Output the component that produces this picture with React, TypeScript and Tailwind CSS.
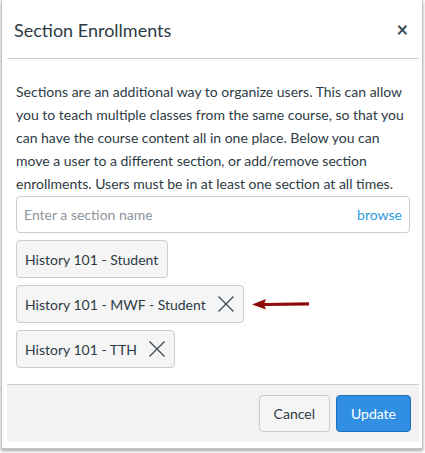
const chips = [
  { label: "History 101 - Student", removable: false },
  { label: "History 101 - MWF - Student", removable: true, pointed: true },
  { label: "History 101 - TTH", removable: true },
];

function CloseIcon() {
  return (
    <svg width="16" height="16" viewBox="0 0 16 16" className="text-[#394b58]">
      <path d="M0.5 0.5 L15.5 15.5 M15.5 0.5 L0.5 15.5" stroke="currentColor" strokeWidth="1.3" fill="none" />
    </svg>
  );
}

export default function App() {
  return (
    <div className="w-[425px] h-[453px] bg-white font-['Lato',sans-serif] text-[#2d3b45]">
      <div className="ml-[1px] w-[422px] h-[449px] border-x border-b border-[#c4c4c4] shadow-[0_2px_3px_rgba(0,0,0,0.35)] pl-[5px] pr-[3px] flex flex-col">
        {/* header */}
        <div className="h-[59px] shrink-0 flex items-center justify-between pl-[7px] pr-[11px] border-b border-[#c7cdd1]">
          <h2 className="text-[18px] leading-none pt-[1px]">Section Enrollments</h2>
          <span className="text-[20px] leading-none font-bold text-[#394b58]">×</span>
        </div>

        {/* body */}
        <div className="flex-1 px-[9px] pt-[21px]">
          <p className="text-[14px] leading-[23px]">
            Sections are an additional way to organize users. This can allow you to teach
            multiple classes from the same course, so that you can have the course content all in
            one place. Below you can move a user to a different section, or add/remove section
            enrollments. Users must be in at least one section at all times.
          </p>

          <div className="mt-[1px] h-[37px] border border-[#c7cdd1] rounded-[4px] flex items-center justify-between px-[7px] text-[14px]">
            <span className="text-[#8b969e]">Enter a section name</span>
            <span className="text-[#2d9be0]">browse</span>
          </div>

          <div className="mt-[7px] flex flex-col items-start gap-[7px]">
            {chips.map((c) => (
              <div key={c.label} className="flex items-center">
                <div className="h-[38px] flex items-center gap-[12px] border border-[#c7cdd1] bg-[#f5f5f5] rounded-[4px] pl-[8px] pr-[9px] text-[14px]">
                  <span>{c.label}</span>
                  {c.removable && <CloseIcon />}
                </div>
                {c.pointed && (
                  <svg width="58" height="12" viewBox="0 0 58 12" className="ml-[8px]">
                    <path d="M0 6.5 L14 1 L12.5 5 L57 4.2 L57 7.4 L12.5 8 L14 11.5 Z" fill="#8f0b0b" />
                  </svg>
                )}
              </div>
            ))}
          </div>
        </div>

        {/* footer */}
        <div className="h-[58px] shrink-0 mb-[6px] bg-[#f2f2f2] border-t border-[#c7cdd1] flex items-center justify-end gap-[6px] pr-[8px]">
          <button className="h-[37px] px-[14px] rounded-[4px] border border-[#c7cdd1] bg-[#f5f5f5] text-[14px] text-[#2d3b45]">
            Cancel
          </button>
          <button className="h-[37px] px-[14px] rounded-[4px] border border-[#1d6fb8] bg-[#318fe3] text-[14px] text-white">
            Update
          </button>
        </div>
      </div>
    </div>
  );
}
